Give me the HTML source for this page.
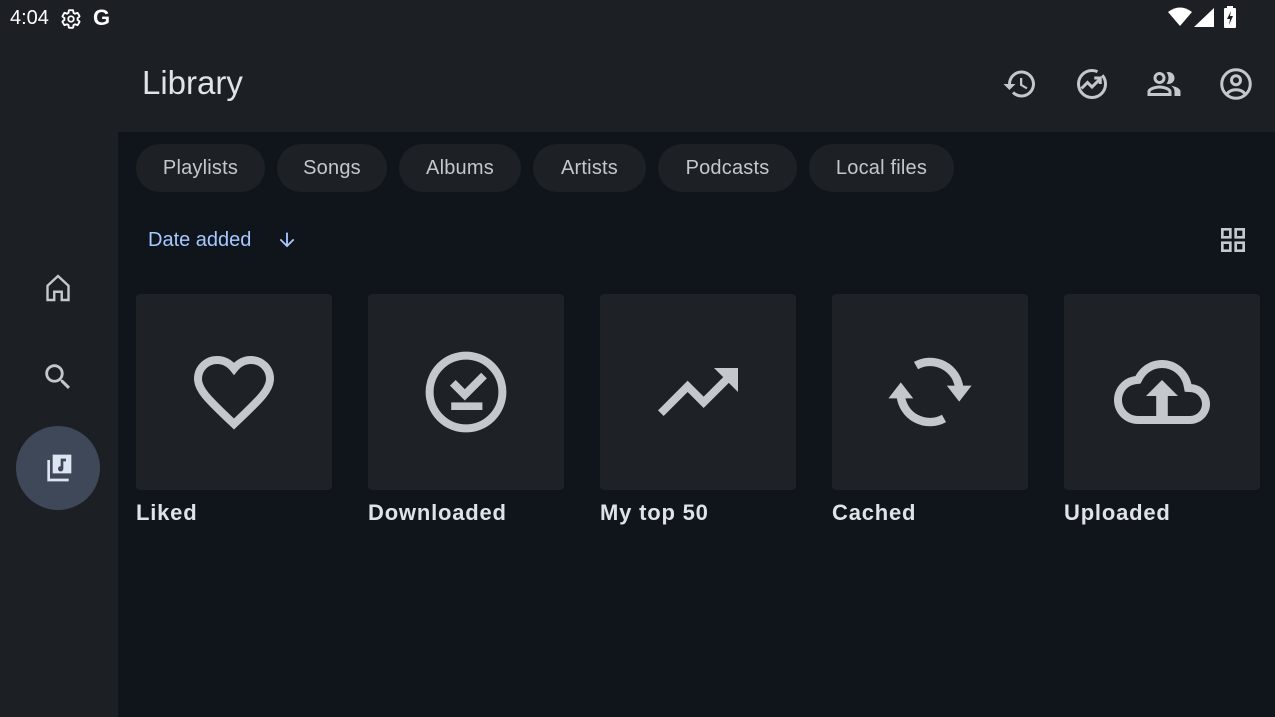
<!DOCTYPE html>
<html><head><meta charset="utf-8"><style>
*{margin:0;padding:0;box-sizing:border-box}
body{width:1275px;height:717px;background:#1c1f24;font-family:"Liberation Sans",sans-serif;position:relative;overflow:hidden;color:#c4c7cc}
.abs{position:absolute}
.content{position:absolute;left:118px;top:132px;width:1157px;height:585px;background:#10141b}
.chip{position:absolute;top:144px;height:48px;border-radius:24px;background:#1d2025;color:#c4c7cc;font-size:20px;line-height:48px;text-align:center;letter-spacing:0.2px}
.tile{position:absolute;top:294px;width:196px;height:196px;border-radius:4px;background:#1e2126}
.tile svg{position:absolute;left:50px;top:50px}
.lbl{position:absolute;top:500px;font-size:22px;font-weight:bold;letter-spacing:0.8px;color:#dfe2e6}
</style></head><body>
<div class="abs" style="left:10px;top:7px;font-size:20px;color:#fff">4:04</div>
<svg class="abs" style="left:60px;top:8px" width="22" height="22" viewBox="0 0 24 24"><path fill="none" stroke="#fff" stroke-width="2" d="M19.14 12.94c.04-.3.06-.61.06-.94 0-.32-.02-.64-.07-.94l2.03-1.58a.49.49 0 0 0 .12-.61l-1.92-3.32a.488.488 0 0 0-.59-.22l-2.39.96c-.5-.38-1.030-.7-1.62-.94l-.36-2.54a.484.484 0 0 0-.48-.41h-3.84c-.24 0-.43.17-.47.41l-.36 2.54c-.59.24-1.13.57-1.62.94l-2.39-.96c-.22-.08-.47 0-.59.22L2.74 8.87c-.12.21-.08.47.12.61l2.03 1.58c-.05.3-.09.63-.09.94s.02.64.07.94l-2.03 1.58a.49.49 0 0 0-.12.61l1.92 3.32c.12.22.37.29.59.22l2.39-.96c.5.38 1.03.7 1.62.94l.36 2.54c.05.24.24.41.48.41h3.84c.24 0 .44-.17.47-.41l.36-2.54c.59-.24 1.13-.56 1.62-.94l2.39.96c.22.08.47 0 .59-.22l1.92-3.32c.12-.22.07-.47-.12-.61l-2.01-1.58z"/><circle cx="12" cy="12" r="3" fill="none" stroke="#fff" stroke-width="2"/></svg>
<div class="abs" style="left:93px;top:5px;font-size:22px;font-weight:bold;color:#fff">G</div>
<svg class="abs" style="left:1168px;top:7px" width="24" height="20" viewBox="0 0 24 20"><path fill="#fff" d="M0 5Q12 -4 24 5L12 19z"/></svg>
<svg class="abs" style="left:1194px;top:8px" width="20" height="19"><path fill="#fff" d="M20 0V19H0z"/></svg>
<svg class="abs" style="left:1223px;top:6px" width="14" height="22" viewBox="0 0 14 22"><rect x="4" y="0" width="6" height="3" fill="#fff"/><rect x="1" y="2" width="12" height="20" rx="1" fill="#fff"/><path d="M8 5L4 13h3l-1 6 4-9H7z" fill="#1c1f24"/></svg>
<div class="abs" style="left:142px;top:64px;font-size:33px;color:#e0e3e8">Library</div>
<svg class="abs" style="left:1002px;top:66px" width="36" height="36" viewBox="0 0 24 24"><path fill="#c4c7cc" d="M13 3a9 9 0 0 0-9 9H1l3.89 3.89.07.14L9 12H6c0-3.87 3.13-7 7-7s7 3.13 7 7-3.13 7-7 7c-1.93 0-3.68-.79-4.94-2.06l-1.42 1.42A8.954 8.954 0 0 0 13 21a9 9 0 0 0 0-18zm-1 5v5l4.28 2.54.72-1.21-3.5-2.08V8H12z"/></svg>
<svg class="abs" style="left:1074px;top:66px" width="36" height="36" viewBox="0 0 24 24"><circle cx="12" cy="12" r="9" fill="none" stroke="#c4c7cc" stroke-width="2" stroke-dasharray="46 4 200"/><path d="M5 15l4-4 3 3 5-5M13.5 8H17.5V12" fill="none" stroke="#c4c7cc" stroke-width="2"/></svg>
<svg class="abs" style="left:1146px;top:66px" width="36" height="36" viewBox="0 0 24 24"><path fill="#c4c7cc" d="M16.67 13.13C18.04 14.06 19 15.32 19 17v3h4v-3c0-2.18-3.57-3.47-6.330-3.87zM15 12c2.21 0 4-1.79 4-4s-1.79-4-4-4c-.47 0-.91.1-1.33.24a5.98 5.98 0 0 1 0 7.52c.42.14.86.24 1.33.24zm-6 0c2.21 0 4-1.79 4-4s-1.79-4-4-4-4 1.79-4 4 1.79 4 4 4zm0-6c1.1 0 2 .9 2 2s-.9 2-2 2-2-.9-2-2 .9-2 2-2zm0 7c-2.67 0-8 1.34-8 4v3h16v-3c0-2.66-5.33-4-8-4zm6 5H3v-.99C3.2 16.29 6.3 15 9 15s5.8 1.29 6 2v1z"/></svg>
<svg class="abs" style="left:1218px;top:66px" width="36" height="36" viewBox="0 0 24 24"><circle cx="12" cy="12" r="9.5" fill="none" stroke="#c4c7cc" stroke-width="2"/><circle cx="12" cy="9.5" r="3" fill="none" stroke="#c4c7cc" stroke-width="2"/><path d="M6 18.5c1.5-2 4-2.7 6-2.7s4.5.7 6 2.7" fill="none" stroke="#c4c7cc" stroke-width="2"/></svg>
<svg class="abs" style="left:40px;top:270px" width="36" height="36" viewBox="0 0 24 24"><path fill="none" stroke="#c4c7cc" stroke-width="1.6" d="M12 4L5 10.5V20h4.5v-5.5h5V20H19v-9.5z"/></svg>
<svg class="abs" style="left:41px;top:360px" width="34" height="34" viewBox="0 0 24 24"><path fill="#c4c7cc" d="M15.5 14h-.79l-.28-.27A6.471 6.471 0 0 0 16 9.5 6.5 6.5 0 1 0 9.5 16c1.61 0 3.09-.59 4.23-1.570l.27.28v.79l5 4.99L20.49 19l-4.99-5zm-6 0C7.01 14 5 11.99 5 9.5S7.01 5 9.5 5 14 7.010 14 9.5 11.99 14 9.5 14z"/></svg>
<div class="abs" style="left:16px;top:426px;width:84px;height:84px;border-radius:42px;background:#3e4858"></div>
<svg class="abs" style="left:42px;top:452px" width="32" height="32" viewBox="0 0 24 24"><path fill="#dde4f2" d="M8 2h14v14H8zM4 6h2v14h14v2H4z"/><path fill="#3e4858" d="M14 5h4v2h-2v5.5a2 2 0 1 1-2-1.9z"/></svg>
<div class="content"></div>
<div class="chip" style="left:136px;width:129px">Playlists</div>
<div class="chip" style="left:277px;width:110px">Songs</div>
<div class="chip" style="left:399px;width:122px">Albums</div>
<div class="chip" style="left:533px;width:113px">Artists</div>
<div class="chip" style="left:658px;width:139px">Podcasts</div>
<div class="chip" style="left:809px;width:145px">Local files</div>
<div class="abs" style="left:148px;top:229px;font-size:20px;color:#a6c8ff">Date added</div>
<svg class="abs" style="left:276px;top:229px" width="22" height="22" viewBox="0 0 24 24"><path fill="#a6c8ff" d="M20 12l-1.41-1.41L13 16.17V4h-2v12.17l-5.58-5.59L4 12l8 8 8-8z"/></svg>
<svg class="abs" style="left:1217px;top:224px" width="32" height="32" viewBox="0 0 24 24"><path fill="#c4c7cc" d="M3 3v8h8V3H3zm6 6H5V5h4v4zm-6 4v8h8v-8H3zm6 6H5v-4h4v4zm4-16v8h8V3h-8zm6 6h-4V5h4v4zm-6 4v8h8v-8h-8zm6 6h-4v-4h4v4z"/></svg>

<div class="tile" style="left:136px"><svg width="96" height="96" viewBox="0 0 24 24"><path fill="none" stroke="#c4c7cc" stroke-width="2" stroke-linejoin="miter" d="M12 6.2C10.9 4.8 9.4 4 7.8 4 5.1 4 3 6.1 3 8.7c0 2.6 2 4.7 9 11.3 7-6.6 9-8.7 9-11.3C21 6.1 18.9 4 16.2 4c-1.6 0-3.1.8-4.2 2.2z"/></svg></div>
<div class="tile" style="left:368px"><svg width="96" height="96" viewBox="0 0 24 24"><circle cx="12" cy="12" r="9.1" fill="none" stroke="#c4c7cc" stroke-width="2"/><path d="M8.7 9.7l3 3 4.8-4.8" fill="none" stroke="#c4c7cc" stroke-width="2"/><rect x="8.3" y="14.6" width="7.8" height="1.9" fill="#c4c7cc"/></svg></div>
<div class="tile" style="left:600px"><svg width="96" height="96" viewBox="0 0 24 24"><path fill="#c4c7cc" d="M16 6l2.29 2.29-4.88 4.88-4-4L2 16.59 3.41 18l6-6 4 4 6.3-6.29L22 12V6z"/></svg></div>
<div class="tile" style="left:832px"><svg width="96" height="96" viewBox="0 0 24 24"><g fill="none" stroke="#c4c7cc" stroke-width="2.1"><path d="M8.5 5.4A7.3 7.3 0 0 1 19.3 11"/><path d="M15.5 18.6A7.3 7.3 0 0 1 4.7 13"/></g><path fill="#c4c7cc" d="M16.2 10.4h6.2l-3.1 4zM1.6 13.6h6.2l-3.1-4z"/></svg></div>
<div class="tile" style="left:1064px"><svg width="96" height="96" viewBox="0 0 24 24"><path fill="#c4c7cc" d="M19.35 10.04C18.67 6.59 15.64 4 12 4 9.11 4 6.6 5.64 5.35 8.04 2.34 8.36 0 10.91 0 14c0 3.31 2.69 6 6 6h13c2.76 0 5-2.24 5-5 0-2.64-2.05-4.78-4.65-4.96zM19 18H6c-2.21 0-4-1.79-4-4 0-2.05 1.53-3.76 3.56-3.97l1.07-.11.5-.95C8.08 7.14 9.94 6 12 6c2.62 0 4.88 1.86 5.39 4.43l.3 1.5 1.53.11c1.56.1 2.78 1.41 2.78 2.96 0 1.65-1.35 3-3 3zM8 13h2.55v6h2.9v-6H16l-4-4z"/></svg></div>
<div class="lbl" style="left:136px">Liked</div>
<div class="lbl" style="left:368px">Downloaded</div>
<div class="lbl" style="left:600px">My top 50</div>
<div class="lbl" style="left:832px">Cached</div>
<div class="lbl" style="left:1064px">Uploaded</div>
</body></html>
